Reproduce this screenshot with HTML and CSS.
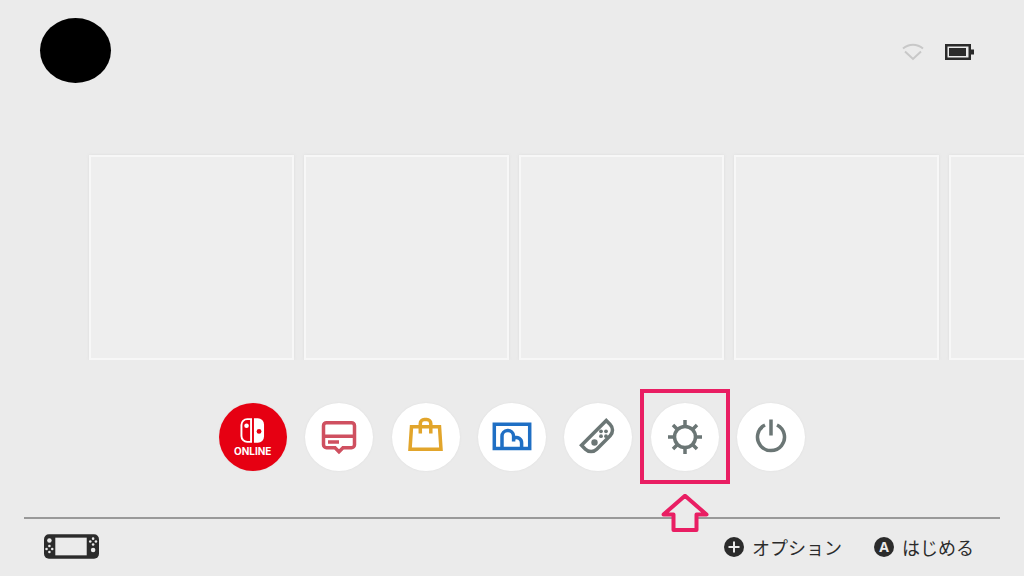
FILE: index.html
```
<!DOCTYPE html>
<html lang="ja">
<head>
    <meta charset="UTF-8">
    <meta name="viewport" content="width=device-width, initial-scale=1.0">
    <title>HOME</title>

    <link rel="stylesheet" href="styles.css">
</head>
<body>
    <header class="top-bar">
        <button class="avatar" aria-label="User"></button>
        <div class="status">
            <svg class="wifi" viewBox="0 0 24 20" aria-hidden="true">
                <path d="M2 6.500C8 1.500 16 1.500 22 6.500"/>
                <path d="M4 9.500l8 7.500 8-7.500"/>
            </svg>
            <svg class="battery" viewBox="0 0 29 16" aria-hidden="true">
                <path d="M0 0h26v5.500h3v5h-3V16H0zM2.500 2.500v11h21v-11z" fill-rule="evenodd"/>
                <path d="M4 4h17v8H4z"/>
            </svg>
        </div>
    </header>

    <main>
        <div class="games">
            <button class="tile" aria-label="Empty slot 1"></button>
            <button class="tile" aria-label="Empty slot 2"></button>
            <button class="tile" aria-label="Empty slot 3"></button>
            <button class="tile" aria-label="Empty slot 4"></button>
            <button class="tile" aria-label="Empty slot 5"></button>
        </div>

        <nav class="dock">
            <div class="dock-item">
                <button class="dock-btn online">
                    <svg class="online-logo" viewBox="0 0 26 26" aria-hidden="true">
                        <path d="M11.500 1.200H7.500A6 6 0 0 0 1.500 7.200v11.600a6 6 0 0 0 6 6H11.500z" fill="none" stroke="#fff" stroke-width="2"/>
                        <circle cx="6.800" cy="8" r="2.400" fill="#fff"/>
                        <path d="M14.500 0.200H18.500a6.500 6.500 0 0 1 6.500 6.500v12.600a6.500 6.500 0 0 1-6.500 6.500H14.500z" fill="#fff"/>
                        <circle cx="19.800" cy="14" r="2.500" fill="#e60012"/>
                    </svg>
                    <span>ONLINE</span>
                </button>
            </div>
            <div class="dock-item">
                <button class="dock-btn news" aria-label="News">
                    <svg viewBox="0 0 44 44">
                        <path d="M9.500 7.700h25a3 3 0 0 1 3 3v19a3 3 0 0 1-3 3H26l-4 4-4-4H9.500a3 3 0 0 1-3-3v-19a3 3 0 0 1 3-3z"/>
                        <path d="M6.500 21.200h31M11 27h11"/>
                    </svg>
                </button>
            </div>
            <div class="dock-item">
                <button class="dock-btn shop" aria-label="Shop">
                    <svg viewBox="0 0 44 44">
                        <path d="M7.500 11.800h28l1.500 22.500H6z"/>
                        <path d="M16.300 18.500V8.500a4 4 0 0 1 4-4h2.500a4 4 0 0 1 4 4v10"/>
                    </svg>
                </button>
            </div>
            <div class="dock-item">
                <button class="dock-btn album" aria-label="Album">
                    <svg viewBox="0 0 44 44">
                        <path d="M4.300 9.300h35.400v24.200H4.300z"/>
                        <path d="M12 33.500V21.500a5.800 5.800 0 0 1 11.600-.5v5.500M23.600 23.500c4-2.500 8 .5 8 4.500v5.500"/>
                    </svg>
                </button>
            </div>
            <div class="dock-item">
                <button class="dock-btn" aria-label="Controllers">
                    <svg viewBox="0 0 44 44">
                        <g transform="rotate(45 22 22)">
                            <path d="M16.200 4.500h5.500a8 8 0 0 1 8 8v19a8 8 0 0 1-8 8h-5.500z"/>
                        </g>
                        <g class="solid">
                            <circle cx="18.500" cy="27.500" r="3.200"/>
                            <circle cx="25" cy="16.300" r="1.900"/>
                            <circle cx="30" cy="16.300" r="1.900"/>
                            <circle cx="25" cy="21.200" r="1.900"/>
                            <circle cx="30" cy="21.200" r="1.900"/>
                        </g>
                    </svg>
                </button>
            </div>
            <div class="dock-item highlighted">
                <button class="dock-btn" aria-label="System settings">
                    <svg viewBox="0 0 44 44">
                        <circle cx="22" cy="22" r="10.500"/>
                        <path d="M22 5v6M22 33v6M5 22h6M33 22h6M10 10l4.500 4.500M29.500 29.500L34 34M34 10l-4.500 4.500M14.500 29.500L10 34"/>
                    </svg>
                </button>
                <svg class="pointer" viewBox="0 0 50 38" aria-hidden="true">
                    <path d="M25 1.800L46.500 20.500H36.500V36H13.500V20.500H3.500z"/>
                </svg>
            </div>
            <div class="dock-item">
                <button class="dock-btn" aria-label="Power">
                    <svg viewBox="0 0 44 44">
                        <path d="M16 10a13.500 13.500 0 1 0 12 0M22 4.500v16"/>
                    </svg>
                </button>
            </div>
        </nav>
    </main>

    <footer class="bottom-bar">
        <svg class="console" viewBox="0 0 56 25" aria-hidden="true">
            <rect width="56" height="25" rx="5" fill="#2b2b2b"/>
            <path d="M11.500 3.500h32v18h-32z" fill="#ebebeb"/>
            <g fill="#ebebeb">
                <circle cx="5.500" cy="6.500" r="2.300"/>
                <circle cx="5.500" cy="12" r="1.300"/>
                <circle cx="5.500" cy="18" r="1.300"/>
                <circle cx="2.600" cy="15" r="1.300"/>
                <circle cx="8.400" cy="15" r="1.300"/>
                <circle cx="50" cy="4.500" r="1.300"/>
                <circle cx="50" cy="10.500" r="1.300"/>
                <circle cx="47.100" cy="7.500" r="1.300"/>
                <circle cx="52.900" cy="7.500" r="1.300"/>
                <circle cx="50" cy="16" r="2.300"/>
            </g>
        </svg>
        <div class="hints">
            <button class="hint">
                <svg viewBox="0 0 20 20" aria-hidden="true">
                    <circle cx="10" cy="10" r="10"/>
                    <path d="M10 4.500v11M4.500 10h11"/>
                </svg>
                オプション
            </button>
            <button class="hint">
                <span class="key">A</span>
                はじめる
            </button>
        </div>
    </footer>
</body>
</html>
```
FILE: styles.css
```
* {
    box-sizing: border-box;
}
body {
    margin: 0;
    min-height: 100vh;
    display: flex;
    flex-direction: column;
    overflow-x: hidden;
    background-color: #ebebeb;
    color: #2b2b2b;
    font-family: "Noto Sans CJK JP", sans-serif;
}
button {
    margin: 0;
    padding: 0;
    border: none;
    background: none;
    color: inherit;
    font-family: inherit;
    cursor: pointer;
}
svg {
    display: block;
}

/* Top bar */
.top-bar {
    display: flex;
    justify-content: space-between;
    padding: 18px 50px 0 40px;
}
.avatar {
    width: 71px;
    height: 65px;
    border-radius: 50%;
    background-color: #000;
}
.status {
    display: flex;
    align-items: center;
    gap: 20px;
    height: 68px;
}
.wifi {
    width: 24px;
    height: 20px;
    fill: none;
    stroke: #c8c8c8;
    stroke-width: 2;
}
.battery {
    width: 29px;
    height: 16px;
    fill: #2b2b2b;
}

/* Game tiles */
.games {
    display: flex;
    gap: 10px;
    padding: 69px 0 0 89px;
    overflow: hidden;
}
.tile {
    flex: none;
    width: 205px;
    height: 205px;
    border: 2px solid #f7f7f7;
    background-color: #eeeeee;
    box-shadow: 0 0 3px #dedede;
}

/* Round menu buttons */
.dock {
    display: grid;
    grid-template-columns: repeat(7, 1fr);
    justify-items: center;
    max-width: 605px;
    margin: 43px auto 0;
}
.dock-item {
    position: relative;
}
.dock-btn {
    display: flex;
    flex-direction: column;
    align-items: center;
    justify-content: center;
    width: 68px;
    height: 68px;
    border-radius: 50%;
    background-color: #fff;
    color: #6b7675;
    box-shadow: 0 0 2px #dcdcdc;
}
.dock-btn svg {
    width: 44px;
    height: 44px;
    fill: none;
    stroke: currentColor;
    stroke-width: 3.5;
}
.dock-btn .solid {
    fill: currentColor;
    stroke: none;
}
.news {
    color: #cf5060;
}
.shop {
    color: #e2a52b;
}
.album {
    color: #1f6fc4;
}
.online {
    gap: 2px;
    background-color: #e60012;
    color: #fff;
    font-family: Inter, sans-serif;
    font-size: 10px;
    font-weight: 700;
    line-height: 12px;
}
.dock-btn .online-logo {
    width: 25px;
    height: 25px;
    stroke: none;
}

/* Frame and arrow around the highlighted button */
.highlighted::before {
    content: "";
    position: absolute;
    inset: -14px -11px -13px;
    border: 4px solid #e91e63;
    pointer-events: none;
}
.pointer {
    position: absolute;
    top: 91px;
    left: 9px;
    width: 50px;
    height: 38px;
    fill: #ebebeb;
    stroke: #e91e63;
    stroke-width: 4;
    stroke-linejoin: round;
}

/* Bottom bar */
.bottom-bar {
    display: flex;
    align-items: center;
    justify-content: space-between;
    height: 59px;
    margin: auto 24px 0;
    padding: 0 26px 2px 20px;
    border-top: 2px solid #999;
}
.console {
    width: 55px;
    height: 25px;
}
.hints {
    display: flex;
    gap: 32px;
}
.hint {
    display: flex;
    align-items: center;
    gap: 8px;
    font-size: 18px;
    line-height: 24px;
}
.hint svg {
    width: 20px;
    height: 20px;
    fill: #2b2b2b;
    stroke: #ebebeb;
    stroke-width: 2;
}
.hint circle {
    stroke: none;
}
.key {
    width: 20px;
    height: 20px;
    border-radius: 50%;
    background-color: #2b2b2b;
    color: #ebebeb;
    font-family: "Open Sans", sans-serif;
    font-size: 14px;
    font-weight: 700;
    line-height: 20px;
}
```
